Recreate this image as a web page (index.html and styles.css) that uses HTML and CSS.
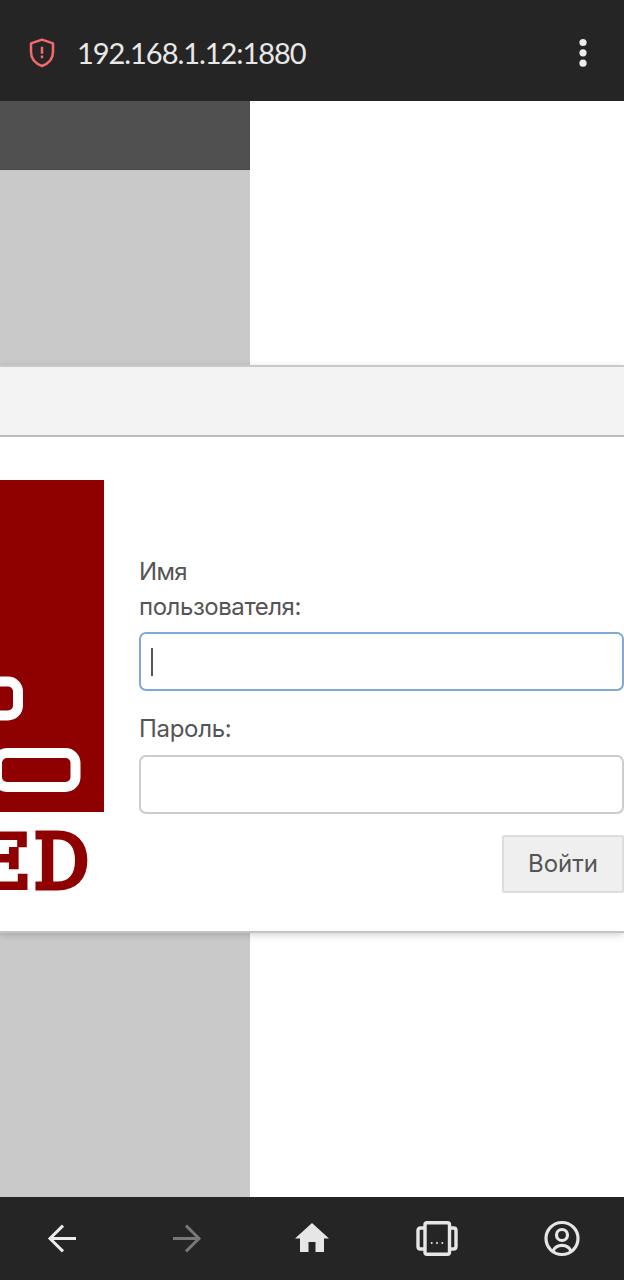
FILE: index.html
```html
<!DOCTYPE html>
<html lang="ru">
<head>
<meta charset="utf-8">
<title>Node-RED</title>
<link rel="stylesheet" href="styles.css">
</head>
<body>
<div class="browser">
  <header class="address-bar">
    <svg class="shield" width="26" height="30" viewBox="0 0 26 30" fill="none" stroke="#f4696c" stroke-width="2.500" stroke-linejoin="round"><path d="M13 1.600 L24 5.400 V14 C24 21 19.500 25.500 13 28 C6.500 25.500 2 21 2 14 V5.400 Z"/><path d="M13 8.700 V15.800 M13 17.600 V20.300"/></svg>
    <span class="url">192.168.1.12:1880</span>
    <svg class="menu" width="8" height="30" viewBox="0 0 8 30" fill="#ececec"><circle cx="4" cy="4.500" r="3.600"/><circle cx="4" cy="14.800" r="3.600"/><circle cx="4" cy="25.200" r="3.600"/></svg>
  </header>
  <main class="viewport">
    <div class="editor">
      <div class="editor-header"></div>
      <div class="editor-shade"></div>
    </div>
    <section class="dialog">
      <div class="dialog-title"></div>
      <div class="dialog-body">
        <svg class="logo" width="104" height="420" viewBox="0 0 104 420">
          <rect width="104" height="332" fill="#8f0000"/>
          <g fill="none" stroke="#fff" stroke-width="10">
            <rect x="-60" y="201.500" width="78" height="34" rx="10"/>
            <rect x="-3" y="273" width="78.500" height="34" rx="10"/>
          </g>
          <g class="logo-text">
            <text class="letter-e" x="-30" y="407.500" textLength="62" lengthAdjust="spacingAndGlyphs">E</text>
            <text x="34" y="407.500" textLength="55" lengthAdjust="spacingAndGlyphs">D</text>
          </g>
        </svg>
        <form class="login">
          <label class="label"><span class="word-name">Имя</span><br><span class="word-user">пользователя:</span></label>
          <div class="field focused"><span class="caret"></span></div>
          <label class="label label-password">Пароль:</label>
          <div class="field"></div>
          <button class="submit" type="button">Войти</button>
        </form>
      </div>
    </section>
  </main>
  <nav class="toolbar">
    <span class="tool"><svg width="44" height="44" viewBox="0 0 44 44" fill="none" stroke="#ececec" stroke-width="3"><path d="M36 22.500 H10 M23 9.600 L10 22.500 L23 35.400"/></svg></span>
    <span class="tool"><svg width="44" height="44" viewBox="0 0 44 44" fill="none" stroke="#777" stroke-width="3"><path d="M8 22.500 H34 M21 9.600 L34 22.500 L21 35.400"/></svg></span>
    <span class="tool"><svg width="44" height="44" viewBox="0 0 44 44" fill="#e6e6e6"><path d="M22 7 L39 22.500 H34 V36 H25.500 V26 H18.500 V36 H10 V22.500 H5 Z"/></svg></span>
    <span class="tool"><svg width="44" height="44" viewBox="0 0 44 44" fill="none" stroke="#e6e6e6" stroke-width="3.400"><rect x="10" y="6.700" width="24.500" height="31.600" rx="2"/><path d="M9 12 H5.500 Q3 12 3 14.500 V30.500 Q3 33 5.500 33 H9 M35 12 H38.500 Q41 12 41 14.500 V30.500 Q41 33 38.500 33 H35"/><g fill="#e6e6e6" stroke="none"><circle cx="16.700" cy="27" r="1"/><circle cx="22" cy="27" r="1"/><circle cx="27.300" cy="27" r="1"/></g></svg></span>
    <span class="tool"><svg width="44" height="44" viewBox="0 0 44 44" fill="none" stroke="#e6e6e6" stroke-width="3.200"><circle cx="22" cy="22.500" r="16"/><circle cx="22" cy="19" r="5.500"/><path d="M13 35 Q15.500 29.400 22 29.400 T31 35"/></svg></span>
  </nav>
</div>
</body>
</html>
```
FILE: styles.css
```css
* { box-sizing: border-box; }
body { margin: 0; background: #fff; font-family: Inter, "Noto Sans", sans-serif; }
.browser { display: flex; flex-direction: column; width: 624px; height: 1280px; overflow: hidden; }
.address-bar { display: flex; align-items: center; height: 101px; padding: 6px 37.500px 0 28.500px; background: #252525; }
.shield { margin-top: -2px; }
.url { margin-left: 22.500px; margin-top: -1px; font-family: Lato, sans-serif; font-size: 29px; line-height: 36px; letter-spacing: -1.05px; color: #e8e8e8; }
.menu { margin-left: auto; margin-top: -2px; }
.viewport { position: relative; flex: 1; background: #fff; overflow: hidden; }
.editor { display: flex; flex-direction: column; width: 250px; height: 100%; }
.editor-header { height: 69px; background: #505050; border-bottom: 1px solid #484848; }
.editor-shade { flex: 1; background: #c9c9c9; }
.dialog { position: absolute; top: 264px; left: 0; width: 624px; height: 568px; background: #fff; border-top: 2px solid #c9c9c9; border-bottom: 2px solid #c4c4c4; box-shadow: 0 2px 7px rgba(0, 0, 0, 0.18); }
.dialog-title { height: 70px; background: #f3f3f3; border-bottom: 2px solid #bbb; }
.dialog-body { display: flex; gap: 35px; padding-top: 43px; }
.logo { flex: none; }
.logo-text { font: 74px "DejaVu Serif", serif; fill: #8f0000; stroke: #8f0000; stroke-width: 5px; }
.letter-e { stroke-width: 4px; }
.login { display: flex; flex: 1; flex-direction: column; padding-top: 74px; }
.label { font-size: 24px; line-height: 35px; color: #555; }
.word-name { letter-spacing: -0.7px; }
.word-user { letter-spacing: -0.45px; }
.label-password { margin-top: 20px; letter-spacing: -0.3px; }
.field { height: 59px; margin-top: 8px; padding: 14px 10px; border: 2px solid #ccc; border-radius: 7px; }
.label-password + .field { margin-top: 9px; }
.focused { border-color: #82a9d2; }
.caret { display: block; width: 2px; height: 28px; background: #555; }
.submit { align-self: flex-end; width: 122px; height: 58px; margin-top: 21px; padding: 0 0 2px; border: 2px solid #ddd; border-radius: 2px; background: #efefef; font: 24px Inter, "Noto Sans", sans-serif; color: #555; }
.toolbar { display: flex; height: 83px; padding-bottom: 2px; background: #252525; }
.tool { display: flex; flex: 1; align-items: center; justify-content: center; }
```
